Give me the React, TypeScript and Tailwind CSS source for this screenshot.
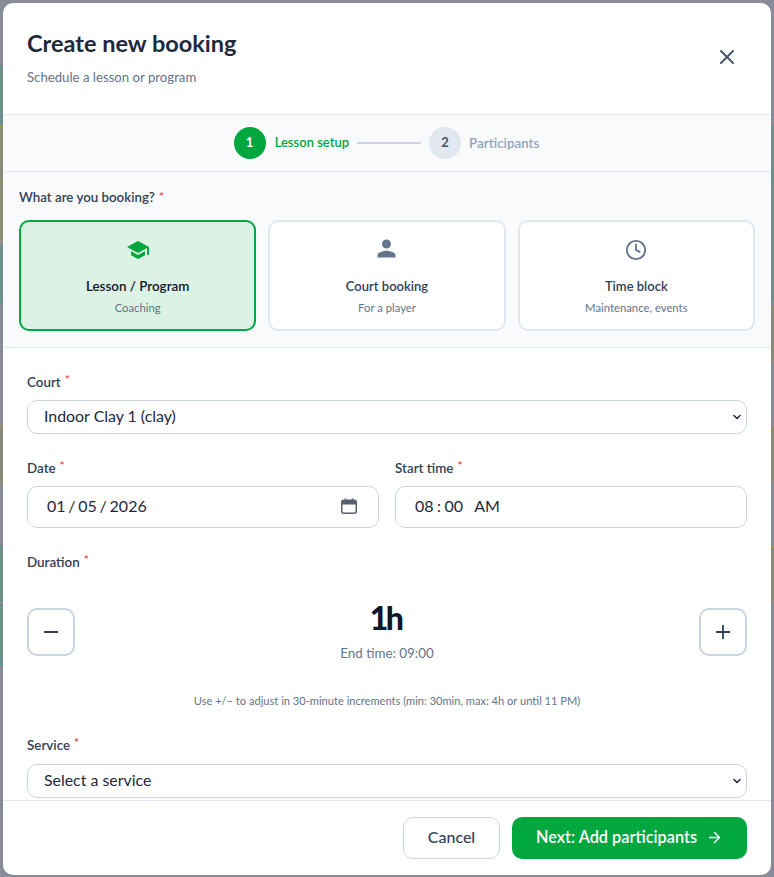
import { Minus, Plus, X, ArrowRight, ChevronDown } from "lucide-react";

// what shows of the page behind the dialog, on each side
const leftBands = [
  { h: 66, c: "bg-[#888c98]" },
  { h: 1, c: "bg-[#4f9a86]" },
  { h: 59, c: "bg-[#6f8f8b]" },
  { h: 1, c: "bg-[#b09a45]" },
  { h: 54, c: "bg-[#8a8a78]" },
  { h: 1, c: "bg-[#b09a45]" },
  { h: 59, c: "bg-[#8a8a78]" },
  { h: 1, c: "bg-[#b09a45]" },
  { h: 4, c: "bg-[#888c98]" },
  { h: 55, c: "bg-[#6f8f8b]" },
  { h: 1, c: "bg-[#4f9a86]" },
  { h: 123, c: "bg-[#888c98]" },
  { h: 1, c: "bg-[#b09a45]" },
  { h: 55, c: "bg-[#8a8a78]" },
  { h: 1, c: "bg-[#b09a45]" },
  { h: 64, c: "bg-[#888c98]" },
  { h: 1, c: "bg-[#4f9a86]" },
  { h: 55, c: "bg-[#6f8f8b]" },
  { h: 1, c: "bg-[#c08a90]" },
  { h: 61, c: "bg-[#6f8f8b]" },
  { h: 1, c: "bg-[#4f9a86]" },
  { h: 211, c: "bg-[#888c98]" },
];

const rightBands = [
  { h: 126, c: "bg-[#888c98]" },
  { h: 1, c: "bg-[#4f9a86]" },
  { h: 54, c: "bg-[#6f8f8b]" },
  { h: 1, c: "bg-[#4f9a86]" },
  { h: 4, c: "bg-[#7c8d90]" },
  { h: 115, c: "bg-[#6f8f8b]" },
  { h: 1, c: "bg-[#4f9a86]" },
  { h: 4, c: "bg-[#888c98]" },
  { h: 55, c: "bg-[#8a8a78]" },
  { h: 1, c: "bg-[#b09a45]" },
  { h: 63, c: "bg-[#888c98]" },
  { h: 1, c: "bg-[#b09a45]" },
  { h: 55, c: "bg-[#8a8a78]" },
  { h: 1, c: "bg-[#b09a45]" },
  { h: 64, c: "bg-[#888c98]" },
  { h: 1, c: "bg-[#b09a45]" },
  { h: 54, c: "bg-[#8a8a78]" },
  { h: 1, c: "bg-[#b09a45]" },
  { h: 275, c: "bg-[#888c98]" },
];

function Strip({ bands }: { bands: { h: number; c: string }[] }) {
  return (
    <div className="w-[3px] shrink-0 flex flex-col">
      {bands.map((b, i) => (
        <div key={i} className={b.c} style={{ height: b.h }} />
      ))}
    </div>
  );
}

function Required({ low }: { low?: boolean }) {
  return (
    <span className={low ? "text-[#ef4444] relative -top-[1px] ml-1 text-[12px]" : "text-[#ef4444] relative -top-[3px] ml-1 text-[12px]"}>*</span>
  );
}

function Label({ children }: { children: string }) {
  return (
    <div className="text-[13.4px] font-semibold text-[#334155] h-[18px] leading-[16px] mb-[8px]">
      {children}
      <Required />
    </div>
  );
}

function SelectBox({ value }: { value: string }) {
  return (
    <div className="relative">
      <select
        defaultValue={value}
        className="appearance-none w-full h-[34px] rounded-[10px] border border-[#cbd5e1] bg-white pl-4 pr-6 pb-[2px] text-[15.9px] text-[#1e293b]"
      >
        <option>{value}</option>
      </select>
      <ChevronDown size={12} strokeWidth={3} className="absolute right-[4px] top-[11px] text-[#1e293b] pointer-events-none" />
    </div>
  );
}

function TypeCard({
  icon,
  title,
  sub,
  active,
}: {
  icon: React.ReactNode;
  title: string;
  sub: string;
  active?: boolean;
}) {
  return (
    <div
      className={
        active
          ? "flex-1 h-[111px] rounded-[10px] border-2 border-[#00a63e] bg-[#dcf2e5] flex flex-col items-center pt-[16px]"
          : "flex-1 h-[111px] rounded-[10px] border-2 border-[#e2e8f0] bg-white flex flex-col items-center pt-[16px]"
      }
    >
      <div className="h-[24px] flex items-center">{icon}</div>
      <div className={active ? "mt-[15px] text-[13.4px] font-semibold text-[#0f172a] leading-[18px]" : "mt-[15px] text-[13px] font-semibold text-[#334155] leading-[18px]"}>
        {title}
      </div>
      <div className="mt-[5px] text-[11.3px] text-[#64748b] leading-[16px]">{sub}</div>
    </div>
  );
}

export default function App() {
  return (
    <div className="h-[877px] w-[774px] bg-[#888c98] flex font-['Lato',sans-serif]">
      <Strip bands={leftBands} />
      <div className="w-[768px] pt-[3px]">
        <div className="h-[872px] bg-white rounded-[10px] overflow-hidden flex flex-col">
          {/* Header */}
          <div className="h-[112px] px-6 pt-[25px] flex justify-between border-b border-[#e2e8f0]">
            <div>
              <h1 className="text-[23.5px] font-bold text-[#1e293b] leading-[30px]">Create new booking</h1>
              <p className="mt-[10px] text-[13.2px] text-[#64748b] leading-[18px]">Schedule a lesson or program</p>
            </div>
            <X size={24} className="text-[#475569] mt-[17px] mr-[8px]" />
          </div>

          {/* Steps */}
          <div className="h-[57px] bg-[#f8fafc] border-b border-[#e2e8f0] pr-[1px] flex items-center justify-center gap-2">
            <div className="w-8 h-8 rounded-full bg-[#00a63e] text-white text-[13px] font-bold flex items-center justify-center">1</div>
            <span className="text-[13px] font-semibold text-[#00a63e] ml-[1px]">Lesson setup</span>
            <div className="w-16 h-[2px] bg-[#cbd5e1]" />
            <div className="w-8 h-8 rounded-full bg-[#e2e8f0] text-[#475569] text-[13px] font-bold flex items-center justify-center">2</div>
            <span className="text-[13.4px] font-semibold text-[#94a3b8]">Participants</span>
          </div>

          {/* Booking type */}
          <div className="h-[176px] bg-[#f8fafc] border-b border-[#e2e8f0] px-4 pt-[16px]">
            <div className="text-[13.3px] font-semibold text-[#334155] h-[18px] leading-[18px] mb-[14px]">
              What are you booking?
              <Required low />
            </div>
            <div className="flex gap-3">
              <TypeCard
                active
                title="Lesson / Program"
                sub="Coaching"
                icon={
                  <svg width="24" height="24" viewBox="0 0 24 24" fill="#00a63e">
                    <path d="M5 13.18v4L12 21l7-3.82v-4L12 17l-7-3.82zM12 3L1 9l11 6 9-4.91V17h2V9L12 3z" />
                  </svg>
                }
              />
              <TypeCard
                title="Court booking"
                sub="For a player"
                icon={
                  <svg width="27" height="27" viewBox="0 0 24 24" fill="#64748b" className="-mt-[4px]">
                    <path d="M12 12c2.21 0 4-1.79 4-4s-1.79-4-4-4-4 1.79-4 4 1.79 4 4 4zm0 2c-2.67 0-8 1.34-8 4v2h16v-2c0-2.66-5.33-4-8-4z" />
                  </svg>
                }
              />
              <TypeCard
                title="Time block"
                sub="Maintenance, events"
                icon={
                  <svg width="22" height="22" viewBox="0 0 24 24" fill="none" stroke="#64748b" strokeWidth="2" strokeLinecap="round" strokeLinejoin="round">
                    <circle cx="12" cy="12" r="10" />
                    <path d="M12 6v6l4 2" />
                  </svg>
                }
              />
            </div>
          </div>

          {/* Form */}
          <div className="h-[452px] px-6 pt-[26px]">
            <Label>Court</Label>
            <SelectBox value="Indoor Clay 1 (clay)" />

            <div className="flex gap-4 mt-[26px]">
              <div className="flex-1">
                <Label>Date</Label>
                <div className="relative">
                  <input
                    type="date"
                    defaultValue="2026-01-05"
                    className="w-full h-[42px] rounded-[10px] border border-[#cbd5e1] pl-[18px] pr-4 pb-[3px] text-[16px] text-[#1e293b] [&::-webkit-calendar-picker-indicator]:hidden [&::-webkit-datetime-edit-text]:px-[1.75px]"
                  />
                  <svg width="16" height="16" viewBox="0 0 16 16" className="absolute right-[22px] top-[12px] pointer-events-none">
                    <rect x="0.75" y="2.25" width="14.5" height="13" rx="2" fill="none" stroke="#565f6e" strokeWidth="1.5" />
                    <path d="M1 4a2 2 0 0 1 2-2h10a2 2 0 0 1 2 2v2.5H1z" fill="#565f6e" />
                    <path d="M4.5 0.5v2.5M11.5 0.5v2.5" stroke="#565f6e" strokeWidth="1.5" />
                  </svg>
                </div>
              </div>
              <div className="flex-1">
                <Label>Start time</Label>
                <input
                  type="time"
                  defaultValue="08:00"
                  className="w-full h-[42px] rounded-[10px] border border-[#cbd5e1] pl-[18px] pr-4 pb-[3px] text-[16px] text-[#1e293b] [&::-webkit-calendar-picker-indicator]:hidden [&::-webkit-datetime-edit-text]:px-[2.5px]"
                />
              </div>
            </div>

            <div className="mt-[26px]">
              <Label>Duration</Label>
            </div>
            <div className="flex items-start justify-between mt-[36px]">
              <button className="w-12 h-12 rounded-[10px] border-2 border-[#cbd5e1] flex items-center justify-center">
                <Minus size={22} className="text-[#334155]" />
              </button>
              <div className="flex flex-col items-center -mt-[10px]">
                <div className="text-[32px] font-black text-[#0f172a] leading-[40px] tracking-[-2.5px] pr-[3px]">1h</div>
                <div className="mt-[6px] text-[13.4px] text-[#64748b] leading-[18px]">End time: 09:00</div>
              </div>
              <button className="w-12 h-12 rounded-[10px] border-2 border-[#cbd5e1] flex items-center justify-center">
                <Plus size={22} className="text-[#334155]" />
              </button>
            </div>
            <div className="mt-[30px] text-center text-[11.1px] text-[#64748b] leading-[17px]">
              Use +/− to adjust in 30-minute increments (min: 30min, max: 4h or until 11 PM)
            </div>
            <div className="mt-[28px]">
              <Label>Service</Label>
              <div className="pt-[1px]">
                <SelectBox value="Select a service" />
              </div>
            </div>
          </div>

          {/* Footer */}
          <div className="flex-1 border-t border-[#e2e8f0] flex justify-end items-start gap-3 px-6 pt-4">
            <button className="w-[97px] h-[42px] rounded-[10px] border border-[#cbd5e1] bg-white pb-[2px] text-[16px] font-medium text-[#334155]">
              Cancel
            </button>
            <button className="w-[235px] h-[42px] rounded-[10px] bg-[#00a63e] text-white pb-[1px] text-[16.3px] font-semibold flex items-center justify-center gap-[9px]">
              Next: Add participants
              <ArrowRight size={17} />
            </button>
          </div>
        </div>
      </div>
      <Strip bands={rightBands} />
    </div>
  );
}
